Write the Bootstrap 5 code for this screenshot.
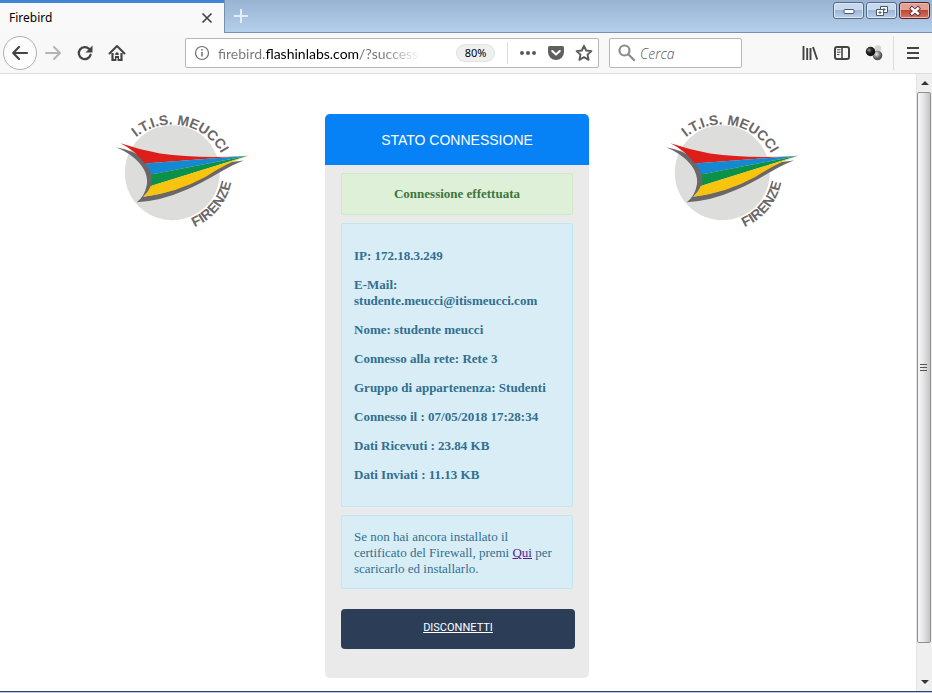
<!DOCTYPE html>
<html lang="it">
<head>
<meta charset="utf-8">
<meta name="viewport" content="width=device-width, initial-scale=1">
<title>Firebird</title>
<link href="https://cdn.jsdelivr.net/npm/bootstrap@5.3.0/dist/css/bootstrap.min.css" rel="stylesheet">
<style>
body { background: #fff; font-family: "Open Sans", "Noto Sans", sans-serif; font-size: 13px; line-height: 16px; color: #111; }
.plain-btn { background: none; border: 0; padding: 0; display: flex; align-items: center; justify-content: center; flex: none; }
/* tab strip */
.tab-strip { height: 33px; background: linear-gradient(#98b4d2, #b5cfec); }
.page-tab { width: 224px; height: 33px; background: #f9f9fa; border-top: 3px solid #3f87d4; padding: 0 8px 0 9px; font-family: "Noto Sans", sans-serif; font-size: 12px; color: #000; }
.strip-rest { border-bottom: 1px solid #7890b0; border-left: 1px solid #7890b0; }
.new-tab { width: 32px; height: 31px; }
.win-group { gap: 2px; padding: 2px 2px 0 0; }
.win-btn { width: 31px; height: 17px; border: 1px solid #566b88; border-radius: 3px; background: linear-gradient(#c7d9ee 45%, #9db7d7 50%, #b9d0ea); box-shadow: inset 0 0 0 1px #dbe7f5; }
.win-close { border-color: #54222a; background: linear-gradient(#e2a194 45%, #c04633 50%, #d27862); box-shadow: inset 0 0 0 1px #eeb9ad; }
/* toolbar */
.tool-bar { height: 41px; background: #f8f8f9; border-bottom: 1px solid #dcdcdc; padding: 0 3px; }
.tool-btn { width: 32px; height: 32px; }
.back-btn { width: 34px; height: 34px; border: 1px solid #b0b0b0; border-radius: 50%; background: #fdfdfd; }
.toolbar-space { width: 52px; flex: 0 1 52px; }
.field-box { height: 30px; background: #fff; border: 1px solid #b8b8b8; border-radius: 2px; }
.field-box input { border: 0; outline: 0; padding: 0; background: none; min-width: 0; height: 26px; font-size: 14px; }
.field-box .url-input { color: transparent; font-family: Lato, sans-serif; background: linear-gradient(90deg, #777 47px, #000 47px, #000 142px, #666 142px, #777 166px, rgba(140,140,140,0) 203px); -webkit-background-clip: text; background-clip: text; width: 205px; }
.zoom-pill { width: 39px; height: 18px; border-radius: 9px; background: #efefef; border: 1px solid #e2e2e2; font-family: "Noto Sans", sans-serif; font-size: 11px; color: #000; }
.field-line { width: 1px; height: 22px; background: #dcdcdc; margin: 0 6px 0 12px; }
.field-btn { width: 28px; height: 28px; }
.search-box { width: 133px; margin-left: 10px; }
.search-box input { font-style: italic; font-weight: 300; width: 90px; }
.search-box input::placeholder { color: #555; opacity: 1; }
.menu-line { width: 1px; height: 34px; background: #dcdcdc; margin: 0 3px; }
/* page */
.page-area { gap: 77px; padding: 40px 14px 12px 12px; }
.school-logo { width: 132px; height: 118px; margin-top: -2px; flex: none; overflow: visible; }
.school-logo text { font-family: "Liberation Sans", Arial, sans-serif; font-weight: bold; font-size: 14px; fill: #6b6768; }
.status-card { width: 264px; background: #eaeaea; border-radius: 5px; overflow: hidden; font-family: "Liberation Serif", "Times New Roman", serif; }
.status-head { height: 51px; background: #0682f6; color: #fff; font-family: "Liberation Sans", Arial, sans-serif; font-size: 14px; line-height: 20px; font-weight: normal; }
.status-body { padding: 8px 16px 29px; }
.note-box { border: 1px solid #bce8f1; background: #d9edf7; color: #31708f; border-radius: 2px; padding: 13px 12px 11px; margin-bottom: 8px; }
.note-ok { border-color: #d0e9c6; background: #dff0d8; color: #3c763d; padding: 12px; }
.info-list { padding: 24px 12px 23px; }
.info-list p { margin: 0 0 13px; }
.info-list p:last-child { margin: 0; }
.note-box a { color: #551a8b; }
.exit-btn { height: 40px; margin: 20px -2px 0 0; padding-bottom: 3px; background: #2c3e57; color: #fff; border-radius: 4px; font-family: Roboto, sans-serif; font-size: 11px; }
.exit-btn:hover { color: #fff; }
/* scroll bar */
.scroll-track { width: 16px; background: #efefef; border-left: 1px solid #e3e3e3; }
.scroll-arrow { width: 15px; height: 18px; }
.scroll-thumb { width: 14px; flex: 551 0 0; border: 1px solid #8f8f8f; border-radius: 2px; background: linear-gradient(90deg, #f7f7f7, #e8e8ea 40%, #c4c4c8); }
.scroll-rest { flex: 30 0 0; }
.window-foot { height: 2px; background: #b9cbe0; border-top: 1px solid #35435c; }
</style>
</head>
<body class="d-flex flex-column min-vh-100">
<header>
  <div class="tab-strip d-flex">
    <div class="page-tab d-flex align-items-center justify-content-between">
      <span>Firebird</span>
      <button class="plain-btn" aria-label="Chiudi scheda"><svg width="18" height="18" viewBox="0 0 18 18" stroke="#444" stroke-width="1.7"><path d="M4.500 4.500l9 9M13.500 4.500l-9 9"/></svg></button>
    </div>
    <div class="strip-rest flex-grow-1 d-flex">
      <button class="plain-btn new-tab" aria-label="Nuova scheda"><svg width="16" height="16" viewBox="0 0 16 16" stroke="#e4eefa" stroke-width="2"><path d="M8 1v14M1 8h14"/></svg></button>
      <div class="win-group d-flex ms-auto align-items-start">
        <button class="plain-btn win-btn" aria-label="Riduci"><svg width="14" height="8" viewBox="0 0 14 8"><rect x="2" y="2.500" width="10" height="4" rx="1" fill="#fff" stroke="#48566c"/></svg></button>
        <button class="plain-btn win-btn" aria-label="Ripristina"><svg width="14" height="12" viewBox="0 0 14 12" fill="#fff" stroke="#48566c"><path d="M5.500 1.500h7v6h-7z"/><path d="M8 4h2v1H8z"/><path d="M1.500 4.500h7v6h-7z"/><path d="M4 7h2v1H4z"/></svg></button>
        <button class="plain-btn win-btn win-close" aria-label="Chiudi"><svg width="14" height="12" viewBox="0 0 14 12" fill="none"><path d="M4 3.500l6 5M10 3.500l-6 5" stroke="#59313b" stroke-width="4.200" stroke-linecap="square"/><path d="M4 3.500l6 5M10 3.500l-6 5" stroke="#fff" stroke-width="2.400" stroke-linecap="square"/></svg></button>
      </div>
    </div>
  </div>
  <nav class="tool-bar d-flex align-items-center" aria-label="Barra di navigazione">
    <button class="plain-btn back-btn" aria-label="Indietro"><svg width="18" height="18" viewBox="0 0 18 18" fill="none" stroke="#444" stroke-width="2.200" stroke-linecap="round" stroke-linejoin="round"><path d="M16 9H2.500M8 3L2.200 9 8 15"/></svg></button>
    <button class="plain-btn tool-btn" aria-label="Avanti"><svg width="18" height="18" viewBox="0 0 18 18" fill="none" stroke="#b5b5b5" stroke-width="2" stroke-linecap="round" stroke-linejoin="round"><path d="M2 9h13.500M10 3l6 6-6 6"/></svg></button>
    <button class="plain-btn tool-btn" aria-label="Ricarica"><svg width="18" height="18" viewBox="0 0 18 18"><path d="M14.600 10.800A6 6 0 1 1 13.200 5" fill="none" stroke="#444" stroke-width="2.300" stroke-linecap="round"/><path d="M16.500 1.500v7h-7z" fill="#444"/></svg></button>
    <button class="plain-btn tool-btn" aria-label="Pagina iniziale"><svg width="18" height="18" viewBox="0 0 18 18"><path d="M1.500 9.500L9 2l7.500 7.500" fill="none" stroke="#444" stroke-width="2" stroke-linecap="round" stroke-linejoin="round"/><path d="M4.500 9v7H7M13.500 9v7H11" fill="none" stroke="#444" stroke-width="2.200"/><path d="M9 8.200a1.700 1.700 0 0 1 1.700 1.700V11H7.300V9.900A1.700 1.700 0 0 1 9 8.200zM7 12h4v5H9.600v-3H8.400v3H7z" fill="#444"/></svg></button>
    <div class="toolbar-space"></div>
    <div class="field-box d-flex align-items-center flex-grow-1">
      <button class="plain-btn ms-2 me-2" aria-label="Informazioni sul sito"><svg width="16" height="16" viewBox="0 0 16 16"><circle cx="8" cy="8" r="6.500" fill="none" stroke="#6d6d6d" stroke-width="1.200"/><path d="M8 7v4.500M8 4v1.600" stroke="#6d6d6d" stroke-width="1.500"/></svg></button>
      <input class="url-input flex-grow-1" type="text" aria-label="Indirizzo" value="firebird.flashinlabs.com/?successm">
      <button class="plain-btn zoom-pill ms-auto">80%</button>
      <div class="field-line"></div>
      <button class="plain-btn field-btn" aria-label="Altre azioni"><svg width="18" height="18" viewBox="0 0 18 18" fill="#5a5a5a"><circle cx="3" cy="9" r="2"/><circle cx="9" cy="9" r="2"/><circle cx="15" cy="9" r="2"/></svg></button>
      <button class="plain-btn field-btn" aria-label="Salva in Pocket"><svg width="18" height="18" viewBox="0 0 18 18"><path d="M2.500 2h13Q17 2 17 3.500V8A8 8 0 0 1 1 8V3.500Q1 2 2.500 2z" fill="#5f5f5f"/><path d="M5.200 7L9 10.600 12.800 7" fill="none" stroke="#fff" stroke-width="2" stroke-linecap="round" stroke-linejoin="round"/></svg></button>
      <button class="plain-btn field-btn" aria-label="Aggiungi ai segnalibri"><svg width="18" height="18" viewBox="0 0 18 18"><path d="M9 1.800l2.200 4.700 5.200.600-3.900 3.500 1.100 5.200L9 13.200l-4.600 2.600 1.100-5.200L1.600 7.100l5.200-.600z" fill="none" stroke="#5a5a5a" stroke-width="1.900" stroke-linejoin="round"/></svg></button>
    </div>
    <div class="field-box search-box d-flex align-items-center">
      <svg class="ms-2 me-1" width="18" height="18" viewBox="0 0 18 18" fill="none" stroke="#8c8c8c" stroke-width="2.200"><circle cx="6.500" cy="6.500" r="5"/><path d="M10.300 10.300L16 16" stroke-linecap="round"/></svg>
      <input type="search" aria-label="Cerca" placeholder="Cerca">
    </div>
    <div class="toolbar-space"></div>
    <button class="plain-btn tool-btn" aria-label="Libreria"><svg width="18" height="18" viewBox="0 0 18 18" stroke="#444" stroke-width="1.900"><path d="M2.500 2v14M6.200 4v12M9.500 4v12M12 3l4.200 12.500"/></svg></button>
    <button class="plain-btn tool-btn" aria-label="Barra laterale"><svg width="18" height="18" viewBox="0 0 18 18" fill="none" stroke="#444"><rect x="2" y="3" width="14" height="12" rx="2" stroke-width="2"/><path d="M9 3v12" stroke-width="1.600"/><path d="M4 5.800h3.500M4 8.200h3.500M4 10.600h2.500"/></svg></button>
    <button class="plain-btn tool-btn" aria-label="Estensione"><svg width="18" height="18" viewBox="0 0 18 18"><defs><radialGradient id="ballDark" cx=".35" cy=".35"><stop offset="0" stop-color="#aaa"/><stop offset=".45" stop-color="#333"/><stop offset="1" stop-color="#111"/></radialGradient><radialGradient id="ballGrey" cx=".4" cy=".35"><stop offset="0" stop-color="#eee"/><stop offset=".5" stop-color="#999"/><stop offset="1" stop-color="#555"/></radialGradient></defs><circle cx="13" cy="4.500" r="3.200" fill="#d3d3d3"/><circle cx="12.500" cy="11.500" r="4.800" fill="url(#ballGrey)"/><circle cx="5.500" cy="7.500" r="4.700" fill="url(#ballDark)"/></svg></button>
    <div class="menu-line"></div>
    <button class="plain-btn tool-btn" aria-label="Menu"><svg width="18" height="18" viewBox="0 0 18 18" stroke="#444" stroke-width="2"><path d="M3 4h12M3 9h12M3 14h12"/></svg></button>
  </nav>
</header>
<div class="flex-grow-1 d-flex">
  <main class="page-area flex-grow-1 d-flex justify-content-center align-items-start">
    <svg class="school-logo" viewBox="0 0 132 118" role="img" aria-label="I.T.I.S. Meucci Firenze">
      <defs>
        <path id="arcTop" d="M20 25.300A56.400 56.400 0 0 1 112.200 68"/>
        <path id="arcLow" d="M78.500 115A62 62 0 0 0 116.500 58"/>
        <g id="emblem">
          <circle cx="56.300" cy="60.700" r="47.500" fill="#dddddc"/>
          <path d="M0 35.500C13 37 25 43 31 51C38 58 39 68 35 76L27.300 84.700Q50 82 72 72Q98 58 115 50L128 48.500Q120 51 103 60.700Q84 72 69.700 78Q45 89 20.700 90.200Q29 84 31 72C32 62 27 53 17 45Q8 38 0 35.500z" fill="#6b6768"/>
          <path d="M4.500 31.300Q24 38 44 41.500Q84 47 132 43.700L28.500 51.500Q20 39 4.500 31.300z" fill="#dc1f1b"/>
          <path d="M28.500 51.500L132 43.700L35.300 62.500Q33.500 56 28.500 51.500z" fill="#1688d2"/>
          <path d="M35.300 62.500L132 43.700L34.700 74Q37 68 35.300 62.500z" fill="#0b9248"/>
          <path d="M34.700 74L132 43.700Q112 50 89.700 64.700Q60 81 27.300 84.700Q32.500 80 34.700 74z" fill="#f8c40e"/>
        </g>
      </defs>
      <use href="#emblem"/>
      <text><textPath href="#arcTop">I.T.I.S. MEUCCI</textPath></text>
      <text><textPath href="#arcLow">FIRENZE</textPath></text>
    </svg>
    <section class="status-card">
      <h1 class="status-head m-0 d-flex align-items-center justify-content-center">STATO CONNESSIONE</h1>
      <div class="status-body">
        <div class="note-box note-ok text-center fw-bold">Connessione effettuata</div>
        <div class="note-box info-list fw-bold">
          <p>IP: 172.18.3.249</p>
          <p>E-Mail: studente.meucci@itismeucci.com</p>
          <p>Nome: studente meucci</p>
          <p>Connesso alla rete: Rete 3</p>
          <p>Gruppo di appartenenza: Studenti</p>
          <p>Connesso il : 07/05/2018 17:28:34</p>
          <p>Dati Ricevuti : 23.84 KB</p>
          <p>Dati Inviati : 11.13 KB</p>
        </div>
        <div class="note-box m-0">Se non hai ancora installato il certificato del Firewall, premi <a href="#">Qui</a> per scaricarlo ed installarlo.</div>
        <a class="exit-btn d-flex align-items-center justify-content-center" href="#">DISCONNETTI</a>
      </div>
    </section>
    <svg class="school-logo" viewBox="0 0 132 118" role="img" aria-label="I.T.I.S. Meucci Firenze">
      <use href="#emblem"/>
      <text><textPath href="#arcTop">I.T.I.S. MEUCCI</textPath></text>
      <text><textPath href="#arcLow">FIRENZE</textPath></text>
    </svg>
  </main>
  <aside class="scroll-track d-flex flex-column" aria-label="Barra di scorrimento">
    <button class="plain-btn scroll-arrow" aria-label="Su"><svg width="8" height="5" viewBox="0 0 8 5"><path d="M4 0l4 4H0z" fill="#333"/></svg></button>
    <div class="scroll-thumb d-flex align-items-center justify-content-center"><svg width="8" height="9" viewBox="0 0 8 9" stroke="#555"><path d="M0 1.500h7M0 4.500h7M0 7.500h7"/></svg></div>
    <div class="scroll-rest"></div>
    <button class="plain-btn scroll-arrow" aria-label="Giù"><svg width="8" height="5" viewBox="0 0 8 5"><path d="M0 0h8L4 4z" fill="#333"/></svg></button>
  </aside>
</div>
<div class="window-foot"></div>
</body>
</html>
